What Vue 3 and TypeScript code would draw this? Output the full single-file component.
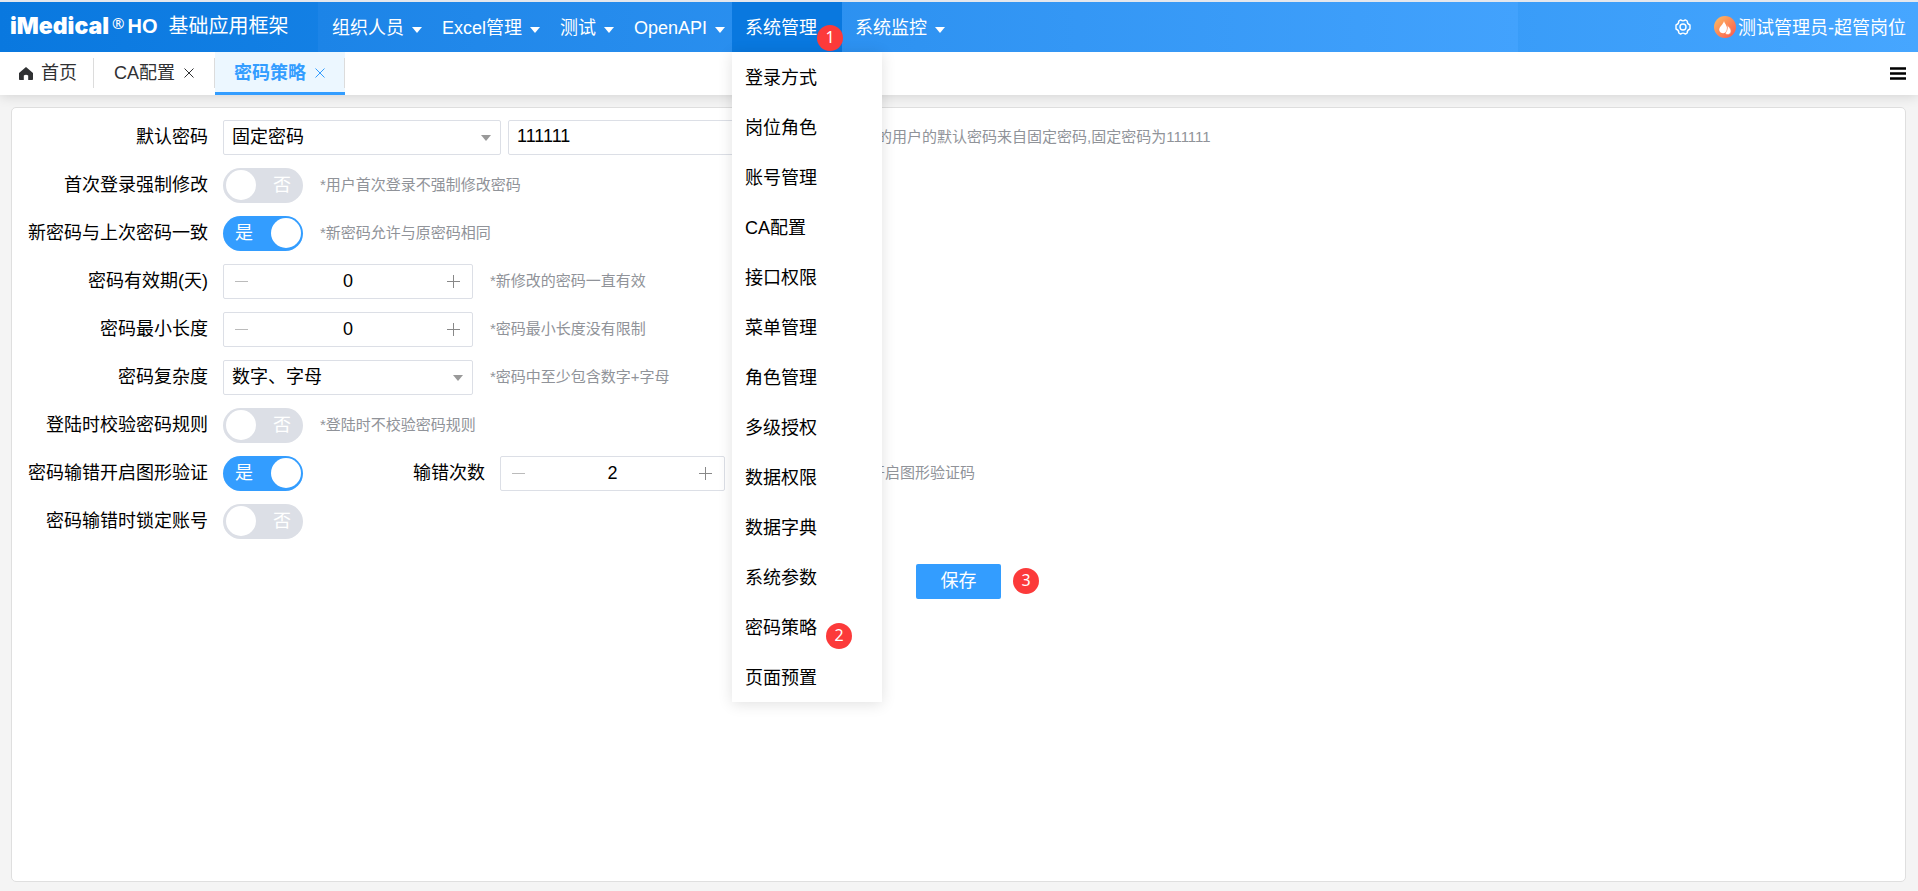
<script setup lang="ts">
import { reactive } from 'vue'

interface NavItem {
  name: string
  open?: boolean
}

const navItems: NavItem[] = [
  { name: '组织人员' },
  { name: 'Excel管理' },
  { name: '测试' },
  { name: 'OpenAPI' },
  { name: '系统管理', open: true },
  { name: '系统监控' },
]

const menuItems: string[] = [
  '登录方式', '岗位角色', '账号管理', 'CA配置', '接口权限', '菜单管理', '角色管理',
  '多级授权', '数据权限', '数据字典', '系统参数', '密码策略', '页面预置',
]

const form = reactive({
  mode: '固定密码',
  password: '111111',
  forceChange: false,
  allowSame: true,
  validDays: 0,
  minLength: 0,
  complexity: '数字、字母',
  checkOnLogin: false,
  captcha: true,
  errorTimes: 2,
  lock: false,
})

type NumberKey = 'validDays' | 'minLength' | 'errorTimes'

function step(key: NumberKey, delta: number) {
  form[key] = Math.max(0, form[key] + delta)
}
</script>

<template>
  <div class="page">
    <header class="header">
      <div class="brand">
        <span class="logo">iMedical</span>
        <span class="reg">®</span>
        <span class="ho">HO</span>
        <span class="product">基础应用框架</span>
      </div>
      <nav class="nav">
        <div v-for="item in navItems" :key="item.name" class="nav-cell">
          <a href="#" class="nav-link" :class="{ open: item.open }">
            {{ item.name }}
            <svg class="caret" viewBox="0 0 10 6"><path d="M0 0H10L5 6Z" fill="currentColor" /></svg>
          </a>
          <span v-if="item.open" class="badge badge-nav">1</span>
          <ul v-if="item.open" class="menu">
            <li v-for="entry in menuItems" :key="entry" class="menu-item">
              <a href="#">{{ entry }}</a>
              <span v-if="entry === '密码策略'" class="badge badge-menu">2</span>
            </li>
          </ul>
        </div>
      </nav>
      <div class="user">
        <button class="icon-button gear" aria-label="设置">
          <svg viewBox="0 0 16 16" width="16" height="16" fill="none" stroke="#fff" stroke-width="1.4" stroke-linejoin="round">
            <path d="M5.6 .9Q8 2.8 10.4 .9L12.2 2Q12 5 15 6V10Q12 11 12.2 14L10.4 15.1Q8 13.2 5.6 15.1L3.8 14Q4 11 1 10V6Q4 5 3.8 2Z" />
            <circle cx="8" cy="8" r="3" />
          </svg>
        </button>
        <svg class="avatar" viewBox="0 0 22 22" width="22" height="22">
          <defs>
            <linearGradient id="flame" x1="0" y1="0" x2="1" y2="1">
              <stop offset="0.1" stop-color="#fdb560" />
              <stop offset="0.9" stop-color="#fb5f50" />
            </linearGradient>
          </defs>
          <circle cx="11" cy="11" r="11" fill="url(#flame)" />
          <path d="M10 5C10.6 7.6 13.4 9.8 13.4 13.6A4.2 4.4 0 0 1 5.2 14C5.2 10.4 9.4 8.4 10 5Z" fill="#fff" />
          <path d="M13.2 8.6C14.2 10.8 17 12.2 17 15A3.2 3.2 0 0 1 11.2 17.2C13.6 14.6 13.6 11.4 13.2 8.6Z" fill="#fff" stroke="#fb8456" stroke-width=".6" />
        </svg>
        <span class="user-name">测试管理员-超管岗位</span>
      </div>
    </header>

    <div class="tabs">
      <a href="#" class="tab home">
        <svg viewBox="0 0 14 13" width="14" height="13"><path d="M7 0L14 6V12.2Q14 13 13.2 13H9.2V8.5Q7 6.8 4.8 8.5V13H.8Q0 13 0 12.2V6Z" fill="#303133" /></svg>
        首页
      </a>
      <div class="tab">
        <a href="#">CA配置</a>
        <button class="icon-button" aria-label="关闭CA配置">
          <svg viewBox="0 0 10 10" width="10" height="10"><path d="M.5 .5L9.5 9.5M9.5 .5L.5 9.5" stroke="currentColor" /></svg>
        </button>
      </div>
      <div class="tab active">
        <a href="#">密码策略</a>
        <button class="icon-button" aria-label="关闭密码策略">
          <svg viewBox="0 0 10 10" width="10" height="10"><path d="M.5 .5L9.5 9.5M9.5 .5L.5 9.5" stroke="currentColor" /></svg>
        </button>
      </div>
      <button class="icon-button more" aria-label="更多">
        <svg viewBox="0 0 16 13" width="16" height="13"><path d="M0 1.5H16M0 6.5H16M0 11.5H16" stroke="#000" stroke-width="2.4" /></svg>
      </button>
    </div>

    <main class="card">
      <form class="form" @submit.prevent>
        <div class="row">
          <label class="name" for="mode">默认密码</label>
          <span class="select wide">
            <select id="mode" v-model="form.mode"><option>固定密码</option></select>
            <svg class="caret" viewBox="0 0 10 6"><path d="M0 0H10L5 6Z" fill="currentColor" /></svg>
          </span>
          <input v-model="form.password" class="text" type="text" aria-label="固定密码">
          <span class="hint">的用户的默认密码来自固定密码,固定密码为111111</span>
        </div>
        <div class="row">
          <label class="name" for="force">首次登录强制修改</label>
          <span class="switch" :class="{ on: form.forceChange }">
            <input id="force" v-model="form.forceChange" type="checkbox">
            <span>{{ form.forceChange ? '是' : '否' }}</span>
          </span>
          <span class="hint">*用户首次登录不强制修改密码</span>
        </div>
        <div class="row">
          <label class="name" for="same">新密码与上次密码一致</label>
          <span class="switch" :class="{ on: form.allowSame }">
            <input id="same" v-model="form.allowSame" type="checkbox">
            <span>{{ form.allowSame ? '是' : '否' }}</span>
          </span>
          <span class="hint">*新密码允许与原密码相同</span>
        </div>
        <div class="row">
          <label class="name" for="days">密码有效期(天)</label>
          <span class="number">
            <button type="button" class="minus" aria-label="减少有效期" @click="step('validDays', -1)"></button>
            <input id="days" v-model.number="form.validDays" type="text">
            <button type="button" class="plus" aria-label="增加有效期" @click="step('validDays', 1)"></button>
          </span>
          <span class="hint">*新修改的密码一直有效</span>
        </div>
        <div class="row">
          <label class="name" for="length">密码最小长度</label>
          <span class="number">
            <button type="button" class="minus" aria-label="减少长度" @click="step('minLength', -1)"></button>
            <input id="length" v-model.number="form.minLength" type="text">
            <button type="button" class="plus" aria-label="增加长度" @click="step('minLength', 1)"></button>
          </span>
          <span class="hint">*密码最小长度没有限制</span>
        </div>
        <div class="row">
          <label class="name" for="complexity">密码复杂度</label>
          <span class="select">
            <select id="complexity" v-model="form.complexity"><option>数字、字母</option></select>
            <svg class="caret" viewBox="0 0 10 6"><path d="M0 0H10L5 6Z" fill="currentColor" /></svg>
          </span>
          <span class="hint">*密码中至少包含数字+字母</span>
        </div>
        <div class="row">
          <label class="name" for="check">登陆时校验密码规则</label>
          <span class="switch" :class="{ on: form.checkOnLogin }">
            <input id="check" v-model="form.checkOnLogin" type="checkbox">
            <span>{{ form.checkOnLogin ? '是' : '否' }}</span>
          </span>
          <span class="hint">*登陆时不校验密码规则</span>
        </div>
        <div class="row">
          <label class="name" for="captcha">密码输错开启图形验证</label>
          <span class="switch" :class="{ on: form.captcha }">
            <input id="captcha" v-model="form.captcha" type="checkbox">
            <span>{{ form.captcha ? '是' : '否' }}</span>
          </span>
          <label class="name second" for="times">输错次数</label>
          <span class="number short">
            <button type="button" class="minus" aria-label="减少次数" @click="step('errorTimes', -1)"></button>
            <input id="times" v-model.number="form.errorTimes" type="text">
            <button type="button" class="plus" aria-label="增加次数" @click="step('errorTimes', 1)"></button>
          </span>
          <span class="hint captcha-hint">开启图形验证码</span>
        </div>
        <div class="row">
          <label class="name" for="lock">密码输错时锁定账号</label>
          <span class="switch" :class="{ on: form.lock }">
            <input id="lock" v-model="form.lock" type="checkbox">
            <span>{{ form.lock ? '是' : '否' }}</span>
          </span>
        </div>
        <div class="actions">
          <div class="save-wrap">
            <button type="submit" class="save">保存</button>
            <span class="badge badge-save">3</span>
          </div>
        </div>
      </form>
    </main>
  </div>
</template>

<style>
body {
  margin: 0;
  background: #f4f4f4;
}
</style>

<style scoped>
.page {
  display: flex;
  flex-direction: column;
  min-height: 100vh;
  box-sizing: border-box;
  font-family: "Liberation Sans", "Noto Sans CJK SC", sans-serif;
  font-size: 18px;
  line-height: 24px;
  color: #000;
}
.page *,
.page *::before,
.page *::after {
  box-sizing: border-box;
}
a {
  color: inherit;
  text-decoration: none;
}
button,
input,
select {
  font: inherit;
  color: inherit;
  margin: 0;
}
.icon-button {
  display: flex;
  padding: 0;
  border: 0;
  background: none;
}
.header {
  display: flex;
  align-items: stretch;
  height: 52px;
  border-top: 2px solid #e4e7ed;
  background: linear-gradient(90deg, #0978df, #46a6ff);
  color: #fff;
  position: relative;
  z-index: 2;
}
.brand {
  display: flex;
  align-items: center;
  flex: 0 0 318px;
  padding-left: 10px;
  padding-bottom: 2px;
  line-height: 28px;
}
.logo {
  font-family: Inter, "Noto Sans", sans-serif;
  font-weight: 900;
  font-size: 23px;
}
.reg {
  font-family: "Noto Sans", sans-serif;
  font-size: 15px;
  margin: 0 3px 6px 3px;
}
.ho {
  font-weight: 700;
  font-size: 20px;
}
.product {
  font-size: 20px;
  margin-left: 11px;
}
.nav {
  display: flex;
  flex: 0 1 1200px;
  padding-left: 1px;
  background: linear-gradient(90deg, #1c84e7, #42a2fd);
}
.nav-cell {
  position: relative;
}
.nav-link {
  display: flex;
  align-items: center;
  gap: 8px;
  height: 50px;
  padding: 2px 7px 0 13px;
  white-space: nowrap;
}
.nav-link.open {
  background: #0978df;
}
.caret {
  width: 10px;
  height: 6px;
  flex: none;
}
.nav-link .caret {
  margin-top: 4px;
}
.menu {
  position: absolute;
  top: 100%;
  left: 0;
  width: 150px;
  margin: 0;
  padding: 0;
  list-style: none;
  background: #fff;
  color: #000;
  box-shadow: 0 2px 14px rgba(0, 0, 0, 0.12);
}
.menu-item {
  position: relative;
}
.menu-item a {
  display: block;
  padding: 14px 13px 12px;
}
.badge {
  position: absolute;
  z-index: 1;
  width: 26px;
  height: 26px;
  border-radius: 50%;
  background: #fc3a3a;
  color: #fff;
  font-family: "Noto Sans", sans-serif;
  font-size: 16px;
  line-height: 24px;
  text-align: center;
}
.badge-nav {
  right: -1px;
  bottom: 1px;
}
.badge-menu {
  left: 94px;
  top: 21px;
}
.badge-save {
  left: calc(100% + 12px);
  top: 4px;
}
.user {
  display: flex;
  align-items: center;
  margin-left: auto;
  padding-right: 12px;
  white-space: nowrap;
}
.gear {
  margin-right: 23px;
}
.avatar {
  margin-right: 2px;
}
.user-name {
  padding-top: 2px;
}
.tabs {
  display: flex;
  height: 43px;
  background: #fff;
  color: #303133;
  box-shadow: 0 1px 12px rgba(0, 0, 0, 0.14);
  position: relative;
  z-index: 1;
}
.tab {
  display: flex;
  align-items: center;
  gap: 9px;
  padding: 0 21px 1px 20px;
  position: relative;
}
.tab::after {
  content: "";
  position: absolute;
  right: 0;
  top: 6px;
  height: 30px;
  border-right: 1px solid #dcdcdc;
}
.tab.home {
  gap: 8px;
  padding: 0 17px 1px 19px;
}
.tab.active {
  padding: 2px 20px 0 19px;
  border-bottom: 3px solid #339dff;
  background: #ecf7ff;
  color: #339dff;
  font-weight: 700;
}
.more {
  align-items: center;
  margin-left: auto;
  padding-right: 12px;
}
.card {
  flex: 1;
  margin: 12px 12px 9px 11px;
  padding: 12px 0;
  border: 1px solid #dfdfdf;
  border-radius: 5px;
  background: #fff;
}
.form {
  display: flex;
  flex-direction: column;
  gap: 13px;
}
.row {
  display: flex;
  align-items: center;
  height: 35px;
  white-space: nowrap;
}
.name {
  flex: 0 0 196px;
  margin-right: 15px;
  padding-bottom: 2px;
  text-align: right;
}
.name.second {
  flex-basis: 182px;
}
.hint {
  margin-left: 17px;
  padding-bottom: 2px;
  font-size: 15px;
  color: #909399;
}
.captcha-hint {
  min-width: 233px;
  text-align: right;
}
.select {
  display: flex;
  align-items: center;
  position: relative;
  width: 250px;
  color: #999;
}
.select.wide {
  width: 278px;
  margin-right: 7px;
}
.select select {
  appearance: none;
  width: 100%;
  height: 35px;
  padding: 0 28px 2px 8px;
  border: 1px solid #dcdfe6;
  border-radius: 2px;
  background: #fff;
  color: #000;
}
.select .caret {
  position: absolute;
  right: 10px;
  pointer-events: none;
}
.text {
  width: 352px;
  height: 35px;
  padding: 0 8px 2px;
  border: 1px solid #dcdfe6;
  border-radius: 2px;
}
.switch {
  position: relative;
  display: flex;
  height: 35px;
}
.switch input {
  appearance: none;
  width: 80px;
  height: 35px;
  border-radius: 18px;
  background: #dcdfe6;
}
.switch input::before {
  content: "";
  position: absolute;
  left: 3px;
  top: 2px;
  width: 30px;
  height: 30px;
  border-radius: 50%;
  background: #fff;
}
.switch span {
  position: absolute;
  right: 12px;
  top: 5px;
  color: #fff;
  pointer-events: none;
}
.switch.on input {
  background: #339dff;
}
.switch.on input::before {
  left: 48px;
}
.switch.on span {
  right: auto;
  left: 12px;
}
.number {
  display: flex;
  width: 250px;
  height: 35px;
  border: 1px solid #dcdfe6;
  border-radius: 2px;
}
.number.short {
  width: 225px;
}
.number input {
  flex: 1;
  min-width: 0;
  padding: 0 0 2px;
  border: 0;
  background: none;
  text-align: center;
}
.number button {
  flex: 0 0 36px;
  position: relative;
  padding: 0;
  border: 0;
  background: none;
  color: #888;
}
.number .minus {
  color: #bbb;
}
.number button::before,
.number .plus::after {
  content: "";
  position: absolute;
  left: 11px;
  top: 16px;
  width: 13px;
  height: 1px;
  background: currentColor;
}
.number .plus::after {
  transform: rotate(90deg);
}
.actions {
  display: flex;
  justify-content: center;
  margin-top: 12px;
}
.save-wrap {
  position: relative;
}
.save {
  display: block;
  width: 85px;
  height: 35px;
  padding: 0 0 2px;
  border: 0;
  border-radius: 2px;
  background: #339dff;
  color: #fff;
}
</style>
